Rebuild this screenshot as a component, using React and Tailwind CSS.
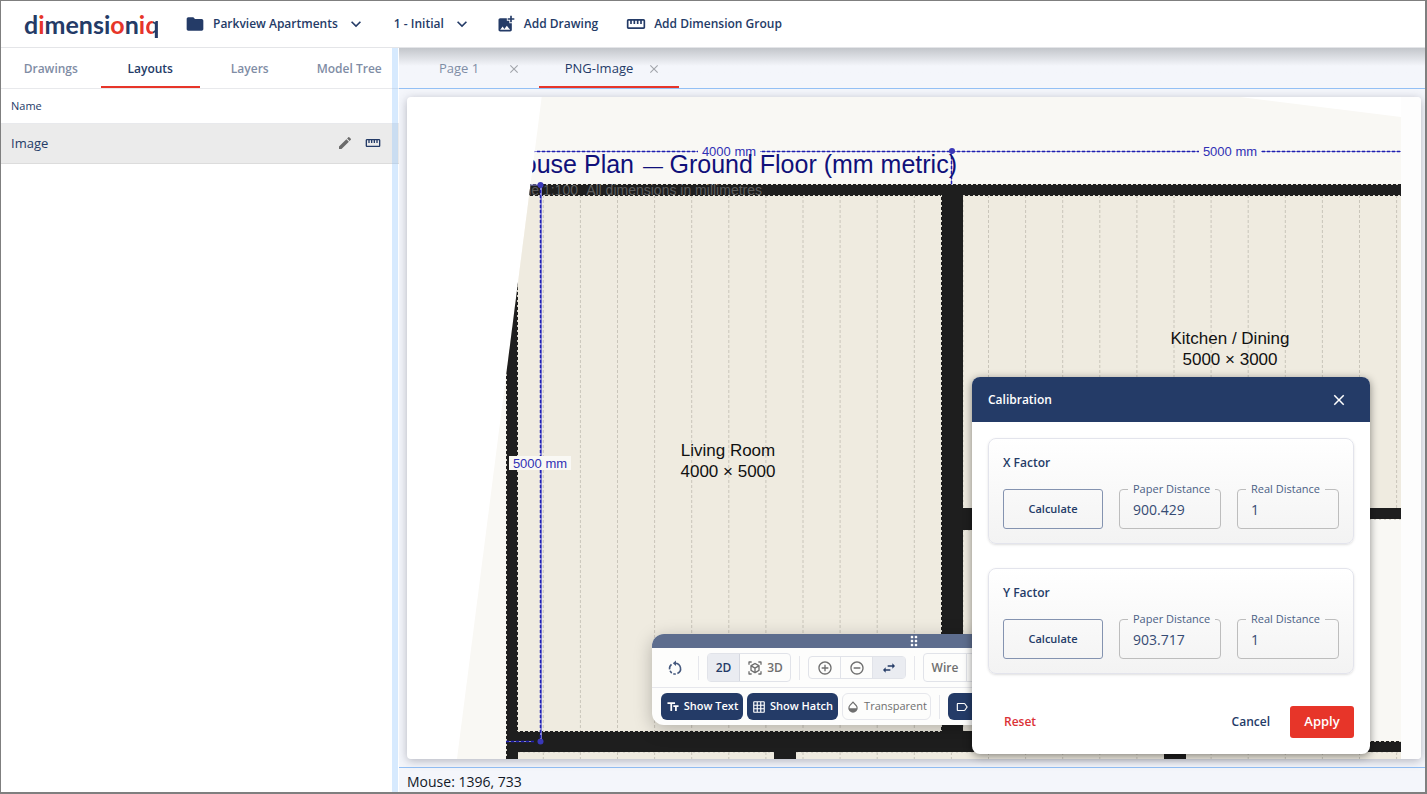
import { useState } from 'react'
import {
  MdAddCircleOutline, MdAddPhotoAlternate, MdClose, MdDragIndicator, MdEdit, MdExpandMore,
  MdFolder, MdGridOn, MdLabelOutline, MdOpacity, MdRemoveCircleOutline,
  MdStraighten, MdSwapHoriz, MdTextFields, MdViewInAr,
} from 'react-icons/md'

const SIDE_TABS = ['Drawings', 'Layouts', 'Layers', 'Model Tree']
const PAGES = ['Page 1', 'PNG-Image']

const FACTORS = [
  { id: 'x', title: 'X Factor', paper: '900.429', real: '1' },
  { id: 'y', title: 'Y Factor', paper: '903.717', real: '1' },
]

// x of every floor board joint
const JOINTS = Array.from({ length: 24 }, (_, i) => 136.3 + i * 37.1)

function Logo() {
  return (
    <a href="#home" aria-label="dimensioniq" className="font-[Lato,sans-serif] text-[25px] leading-8 font-bold text-[#243b67]">
      d<span className="text-[#e73529]">i</span>mensi<span className="text-[#e73529]">o</span>n
      <span className="text-[#e73529]">i</span>
      <span className="bg-linear-to-r from-[#e73529] from-60% to-[#243b67] to-60% bg-clip-text text-transparent">q</span>
    </a>
  )
}

// Open circle with the arrow head on top
function RotateIcon() {
  return (
    <svg viewBox="0 0 16 16" className="size-4" fill="none" stroke="currentColor" strokeWidth="1.6">
      <path d="M8 3.200a5.400 5.400 0 0 1 2.400 10.300M8.800 14a5.400 5.400 0 0 1-2.500-.2M4.800 13a5.400 5.400 0 0 1-1.700-2.200M2.600 9.400a5.400 5.400 0 0 1 1.900-5" />
      <path d="M9 .5v5.400L5.800 3.200z" fill="currentColor" stroke="none" />
    </svg>
  )
}

function Header() {
  return (
    <header className="relative flex h-[47px] shrink-0 items-center border-b border-[#e4e5e8] bg-white pl-[23px] text-xs font-semibold">
      <div className="w-[161px] overflow-hidden whitespace-nowrap"><Logo /></div>
      <button className="flex items-center">
        <MdFolder className="mr-2 size-5" />
        Parkview Apartments
        <MdExpandMore className="ml-2 size-5" />
      </button>
      <button className="ml-7 flex items-center">
        1 - Initial
        <MdExpandMore className="ml-2 size-5" />
      </button>
      <button className="ml-6 flex items-center">
        <MdAddPhotoAlternate className="mr-2 size-5" />
        Add Drawing
      </button>
      <button className="ml-7 flex items-center">
        <MdStraighten className="mr-2 size-5" />
        Add Dimension Group
      </button>
    </header>
  )
}

function Sidebar() {
  const [tab, setTab] = useState('Layouts')
  return (
    <aside className="relative w-[398px] shrink-0 bg-white">
      <nav className="grid h-[41px] grid-cols-4 border-b border-[#e8e9ec] text-xs font-semibold">
        {SIDE_TABS.map(t => (
          <button
            key={t}
            onClick={() => setTab(t)}
            className={`border-b-2 pt-1 ${t === tab ? 'border-[#e73529]' : 'border-transparent text-[#7f8da5]'}`}
          >
            {t}
          </button>
        ))}
      </nav>
      <table className="w-full text-left">
        <thead>
          <tr className="h-[34px] border-b border-[#e8e9ec] text-[11px]">
            <th className="pl-[10px] font-normal">Name</th>
            <th aria-label="Actions" />
          </tr>
        </thead>
        <tbody>
          <tr className="h-10 border-b border-[#dcdcdc] bg-[#ebebeb] text-[13px]">
            <td className="pt-0.5 pl-[10px]">Image</td>
            <td className="pr-[18px]">
              <div className="flex justify-end gap-3">
                <button aria-label="Edit"><MdEdit className="size-4 text-[#6b6b6b]" /></button>
                <button aria-label="Calibrate"><MdStraighten className="size-4" /></button>
              </div>
            </td>
          </tr>
        </tbody>
      </table>
      {/* Splitter */}
      <div className="absolute inset-y-0 right-px w-[6px] cursor-col-resize bg-[#8cc2fb]/35" />
    </aside>
  )
}

function DimLabel({ x, y, children }) {
  return (
    <g>
      <rect x={x - 31} y={y - 11} width="62" height="14" fill="#f9f8f4" />
      <text x={x} y={y + 1} fontSize="13" fill="#3030b4" textAnchor="middle">{children}</text>
    </g>
  )
}

function FloorPlan() {
  return (
    <svg className="block size-full" fontFamily="'Liberation Sans', Arial, sans-serif" role="img" aria-label="House plan, ground floor">
      <defs>
        <clipPath id="sheet">
          <polygon points="134.7,0 833,0 994,20 994,662 50,662" />
        </clipPath>
      </defs>
      <rect x="994" y="0" width="20" height="100%" fill="#fdfdfd" />
      <g clipPath="url(#sheet)">
        <rect width="994" height="662" fill="#f9f8f4" />
        {/* Rooms */}
        <g fill="#efebe0">
          <rect x="99" y="88" width="457" height="574" />
          <rect x="556" y="98" width="438" height="318" />
          <rect x="556" y="432" width="200" height="204" />
          <rect x="389" y="654" width="605" height="8" />
        </g>
        <g stroke="#c9c5ba" strokeDasharray="3 2">
          {JOINTS.map(x => (
            <g key={x}>
              <line x1={x} x2={x} y1="98" y2={x > 556 ? 411 : 634} />
              <line x1={x} x2={x} y1="655" y2="662" />
            </g>
          ))}
        </g>
        {/* Walls */}
        <g fill="#1e1e1e">
          <rect x="99" y="87" width="895" height="12" />
          <rect x="99" y="87" width="12" height="575" />
          <rect x="534" y="98" width="22" height="537" />
          <rect x="99" y="634" width="668" height="21" />
          <rect x="767" y="644" width="227" height="11" />
          <rect x="367" y="654" width="22" height="8" />
          <rect x="757" y="654" width="22" height="8" />
          <rect x="556" y="411" width="200" height="22" />
          <rect x="756" y="411" width="238" height="11" />
        </g>
        <g fill="none" stroke="#d8d5cb" strokeDasharray="2 3">
          <path d="M99 87.5H994M111 98.5H534M556 98.5H994M111 634.5H534M111 655.5H367M389 655.5H757" />
          <path d="M99.500 87V662M110.500 98V634M534.500 98V634M556.500 98V411M556.500 433V634" />
          <path d="M767 644.500H994M779 655.500H994M767 422.500H994M556 433.500H767" />
        </g>
        {/* Dimensions */}
        <g stroke="#8583d4">
          <path d="M100 54.500H994M544.500 54V88M133.500 88V644M134.500 88V644M99 644.500H127M122 88H133" />
          <path d="M100 54.500H994M544.500 54V88M133.500 88V644M99 644.500H127" stroke="#2020b0" strokeWidth="1.500" strokeDasharray="3 2" />
        </g>
        <g fill="#3a38b8">
          <circle cx="545" cy="54" r="3" />
          <circle cx="133.500" cy="88" r="3" />
          <circle cx="133.500" cy="644.500" r="3" />
        </g>
        <DimLabel x={322} y={58}>4000 mm</DimLabel>
        <DimLabel x={823} y={58}>5000 mm</DimLabel>
        <DimLabel x={133} y={370}>5000 mm</DimLabel>
        <text y="76" fontSize="25" fill="#10107a" textAnchor="end">
          <tspan x="227">House Plan</tspan>
          <tspan x="256" fontSize="20">—</tspan>
          <tspan x="550">Ground Floor (mm metric)</tspan>
        </text>
        <text y="98" fontSize="14" fill="#5c5c5c" textAnchor="end">
          <tspan x="171">Scale 1:100</tspan>
          <tspan x="355">All dimensions in millimetres</tspan>
        </text>
        <g fontSize="17" fill="#111" textAnchor="middle">
          <text x="321" y="359">Living Room</text>
          <text x="321" y="380">4000 × 5000</text>
          <text x="823" y="247">Kitchen / Dining</text>
          <text x="823" y="268">5000 × 3000</text>
        </g>
      </g>
    </svg>
  )
}

function Divider() {
  return <div className="h-6 w-px bg-[#e6e7ec]" />
}

function Toolbar() {
  return (
    <div className="absolute bottom-[34px] left-1/2 w-[524px] -translate-x-1/2 overflow-hidden rounded-xl bg-[#fdfdfc] text-[#6f6f6f] shadow-[0_4px_18px_rgba(0,0,0,0.25)]">
      <div className="flex h-[14px] cursor-move items-center justify-center bg-[#5d6d8e] text-white">
        <MdDragIndicator className="size-4" />
      </div>
      <div className="flex h-10 items-center gap-2 border-b border-[#e6e7ec] pl-[15px] text-xs font-semibold">
        <button aria-label="Reset rotation" className="mr-[7px] text-[#46597e]"><RotateIcon /></button>
        <Divider />
        <div className="flex h-[29px] rounded border border-[#e1e3e9]">
          <button className="w-8 border-r border-[#d5d8e0] bg-[#eaecf1] text-[#243b67]">2D</button>
          <button className="flex w-[50px] items-center justify-center gap-1"><MdViewInAr className="size-4" />3D</button>
        </div>
        <Divider />
        <div className="flex h-[23px] divide-x divide-[#e1e3e9] rounded border border-[#e1e3e9]">
          <button aria-label="Zoom in" className="flex w-8 items-center justify-center"><MdAddCircleOutline className="size-4" /></button>
          <button aria-label="Zoom out" className="flex w-8 items-center justify-center"><MdRemoveCircleOutline className="size-4" /></button>
          <button aria-label="Pan" className="flex w-8 items-center justify-center bg-[#eaecf1] text-[#243b67]"><MdSwapHoriz className="size-4" /></button>
        </div>
        <Divider />
        <div className="flex h-[29px] divide-x divide-[#e1e3e9] rounded border border-[#e1e3e9]">
          <button className="w-[43px]">Wire</button>
          <button aria-label="Solid" className="w-[50px]" />
        </div>
      </div>
      <div className="flex h-[37px] items-center gap-1 pl-[9px] text-[11px] font-semibold">
        <button className="flex h-[27px] w-[82px] items-center justify-center gap-1 rounded-md bg-[#243b67] text-white"><MdTextFields className="size-[14px]" />Show Text</button>
        <button className="flex h-[27px] w-[91px] items-center justify-center gap-1 rounded-md bg-[#243b67] text-white"><MdGridOn className="size-[14px]" />Show Hatch</button>
        <button className="mr-1 flex h-[27px] w-[89px] items-center justify-center gap-1 rounded-md border border-[#e6e7ec] font-medium"><MdOpacity className="size-[14px]" />Transparent</button>
        <Divider />
        <button aria-label="Labels" className="ml-1 flex h-[27px] w-[82px] items-center rounded-md bg-[#243b67] pl-[7px] text-white"><MdLabelOutline className="size-[14px]" /></button>
      </div>
    </div>
  )
}

function Field({ id, label, value }) {
  return (
    <fieldset className="-mt-2 h-12 min-w-0 flex-1 rounded border border-[#bdbdbd] pl-2">
      <legend className="px-[5px] text-[11px] leading-4 whitespace-nowrap text-[#4b5f85]"><label htmlFor={id}>{label}</label></legend>
      <input id={id} defaultValue={value} className="block h-6 w-full bg-transparent pl-[5px] text-sm text-[#364b73] outline-none" />
    </fieldset>
  )
}

function Calibration() {
  return (
    <section role="dialog" aria-labelledby="calibration-title" className="absolute right-[55px] bottom-[38px] w-[398px] overflow-hidden rounded-lg bg-white text-xs font-semibold shadow-[0_2px_8px_rgba(0,0,0,0.45)]">
      <header className="flex h-[45px] items-center justify-between bg-[#243b67] pr-[22px] pl-4 text-white">
        <h2 id="calibration-title">Calibration</h2>
        <button aria-label="Close"><MdClose className="size-[18px]" /></button>
      </header>
      <div className="flex flex-col gap-6 p-4 pb-8">
        {FACTORS.map(f => (
          <div key={f.id} className="h-[106px] rounded-lg border border-[#e3e4ec] bg-linear-to-b from-white to-[#f3f3f3] px-[14px] pt-[14px] shadow-sm">
            <h3 className="leading-5">{f.title}</h3>
            <div className="mt-4 flex gap-4 font-normal">
              <button className="h-10 w-[100px] rounded-[3px] border border-[#8493b0] text-[11px] font-semibold">Calculate</button>
              <Field id={`${f.id}-paper`} label="Paper Distance" value={f.paper} />
              <Field id={`${f.id}-real`} label="Real Distance" value={f.real} />
            </div>
          </div>
        ))}
      </div>
      <footer className="flex items-center px-4 pb-4">
        <button className="h-8 px-4 text-[#db3236]">Reset</button>
        <button className="ml-auto h-8 px-5">Cancel</button>
        <button className="h-8 w-16 rounded-[3px] bg-[#e73529] text-[13px] text-white">Apply</button>
      </footer>
    </section>
  )
}

function Workspace() {
  const [page, setPage] = useState('PNG-Image')
  return (
    <main className="flex min-w-0 flex-1 flex-col bg-[#f4f6fb]">
      <nav className="flex h-[41px] border-b border-[#93c0f5] bg-linear-to-b from-[#c3c6cb] to-[#f4f6fb] to-45% text-[13px]">
        {PAGES.map(p => (
          <div key={p} className={`flex w-[140px] items-center border-b-2 pt-[3px] pr-[18px] pl-6 ${p === page ? 'border-[#e73529]' : 'border-transparent text-[#7f8da5]'}`}>
            <button onClick={() => setPage(p)} className="flex-1 text-center">{p}</button>
            <button aria-label={`Close ${p}`} className="ml-3 text-[#a3a6ac]"><MdClose className="size-[14px]" /></button>
          </div>
        ))}
      </nav>
      <div className="min-h-0 flex-1 p-2 pr-1">
        <div className="relative h-full overflow-hidden rounded bg-white shadow-[0_2px_10px_rgba(60,60,80,0.35)]">
          <FloorPlan />
          <Toolbar />
        </div>
      </div>
      <footer className="h-[25px] shrink-0 border-t border-[#93c0f5] pl-2 text-sm leading-7 font-medium text-[#111827]">Mouse: 1396, 733</footer>
    </main>
  )
}

export default function App() {
  return (
    <div className="relative flex h-screen flex-col border-t border-r-2 border-b-2 border-l border-[#7f7f7f] bg-white font-['Open_Sans','Noto_Sans',sans-serif] text-[#243b67]">
      <Header />
      <div className="flex min-h-0 flex-1">
        <Sidebar />
        <Workspace />
      </div>
      <Calibration />
    </div>
  )
}
